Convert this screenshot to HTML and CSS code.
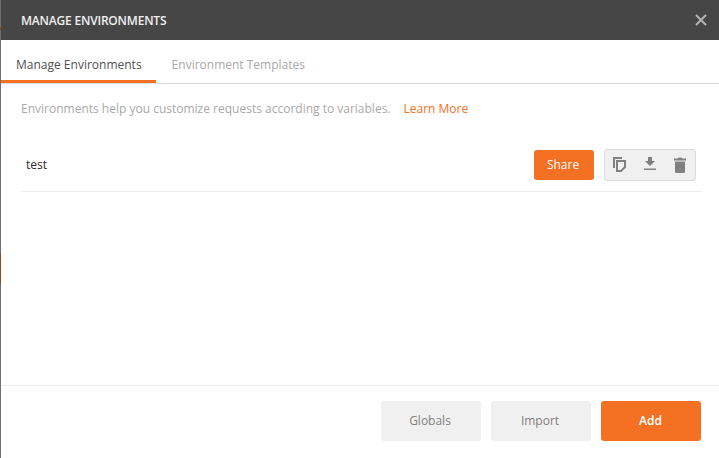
FILE: index.html
```html
<!DOCTYPE html>
<html lang="en">
<head>
<meta charset="utf-8">
<title>Manage Environments</title>
<link rel="stylesheet" href="styles.css">
</head>
<body>
<div class="backdrop"><span class="backdrop-mark backdrop-mark-top"></span><span class="backdrop-mark"></span></div>
<main class="modal">
  <header class="modal-header">
    <h1 class="modal-title">MANAGE ENVIRONMENTS</h1>
    <svg class="close-icon" width="12" height="12" viewBox="0 0 12 12"><path d="M1 1 11 11M11 1 1 11" stroke="#b4b4b4" stroke-width="2" fill="none"/></svg>
  </header>
  <nav class="tabs">
    <a class="tab tab-active">Manage Environments</a>
    <a class="tab">Environment Templates</a>
  </nav>
  <section class="modal-body">
    <p class="intro">Environments help you customize requests according to variables.<a class="learn">Learn More</a></p>
    <div class="env-row">
      <span class="env-name">test</span>
      <button class="btn btn-share">Share</button>
      <div class="actions">
        <svg width="13" height="15" viewBox="0 0 13 15"><path d="M1 11V1H9" fill="none" stroke="#808080" stroke-width="2"/><path d="M4 4H12V10L8 14H4z" fill="none" stroke="#808080" stroke-width="2"/></svg>
        <svg width="12" height="13" viewBox="0 0 12 13"><path d="M4 0h4v4h3L6 9 1 4h3z" fill="#808080"/><path d="M0 11.500h12V13H0z" fill="#808080"/></svg>
        <svg width="12" height="16" viewBox="0 0 12 16"><path d="M0 1.500h4L4.700 .5h2.600L8 1.500h4V3.500H0zM1 4.500h10V14.500q0 1.500-1.500 1.500h-7Q1 16 1 14.500z" fill="#808080"/></svg>
      </div>
    </div>
  </section>
  <footer class="modal-footer">
    <button class="btn btn-large btn-grey">Globals</button>
    <button class="btn btn-large btn-grey">Import</button>
    <button class="btn btn-large btn-add">Add</button>
  </footer>
</main>
</body>
</html>
```
FILE: styles.css
```css
* { box-sizing: border-box; }
html, body { margin: 0; height: 100%; }
body {
  display: flex;
  width: 719px;
  height: 458px;
  overflow: hidden;
  background: #fff;
  font-family: "Open Sans", sans-serif;
  font-size: 12px;
}
.backdrop {
  width: 1px;
  flex: none;
  background: #6f6f6f;
  padding-top: 27px;
}
.backdrop-mark {
  display: block;
  height: 30px;
  background: #8a4a20;
}
.backdrop-mark-top {
  height: 3px;
  margin-bottom: 224px;
}
.modal {
  flex: 1;
  display: flex;
  flex-direction: column;
  min-width: 0;
}
.modal-header {
  height: 40px;
  flex: none;
  display: flex;
  align-items: center;
  justify-content: space-between;
  padding: 0 12px 0 20px;
  background: #464646;
}
.modal-title {
  margin: 0;
  font-size: 12px;
  font-weight: 600;
  letter-spacing: -0.2px;
  color: #f0f0f0;
}
.tabs {
  height: 44px;
  flex: none;
  display: flex;
  border-bottom: 1px solid #dcdcdc;
}
.tab {
  height: 43px;
  padding: 0 15px 0 16px;
  line-height: 50px;
  color: #a9a9a9;
}
.tab-active {
  padding: 0 14px 0 15px;
  color: #505050;
  border-bottom: 3px solid #f47023;
}
.modal-body {
  flex: 1;
  padding: 0 18px 0 20px;
}
.intro {
  margin: 0;
  height: 48px;
  line-height: 50px;
  color: #a9a9a9;
  white-space: nowrap;
}
.learn {
  margin-left: 13px;
  color: #f47023;
}
.env-row {
  height: 60px;
  display: flex;
  align-items: center;
  padding: 7px 5px 0;
  border-bottom: 1px solid #ececec;
}
.env-name {
  flex: 1;
  padding-bottom: 2px;
  color: #282828;
}
.btn {
  border: 0;
  border-radius: 3px;
  font: inherit;
}
.btn-share {
  width: 60px;
  height: 30px;
  margin-right: 10px;
  padding: 0 2px 1px 0;
  background: #f47023;
  color: #fff;
}
.actions {
  width: 92px;
  height: 32px;
  display: flex;
  align-items: flex-start;
  gap: 18px;
  padding: 7px 0 0 8px;
  background: #f0f0f0;
  border: 1px solid #dcdcdc;
  border-radius: 3px;
}
.actions svg {
  display: block;
  flex: none;
}
.modal-footer {
  height: 73px;
  flex: none;
  display: flex;
  justify-content: flex-end;
  gap: 10px;
  padding: 15px 18px 0 0;
  border-top: 1px solid #ececec;
}
.btn-large {
  width: 100px;
  height: 40px;
  padding: 0 2px 2px 0;
}
.btn-grey {
  background: #f0f0f0;
  color: #808080;
}
.btn-add {
  padding: 0 1px 2px 0;
  background: #f47023;
  color: #fff;
  font-weight: 600;
}
```
